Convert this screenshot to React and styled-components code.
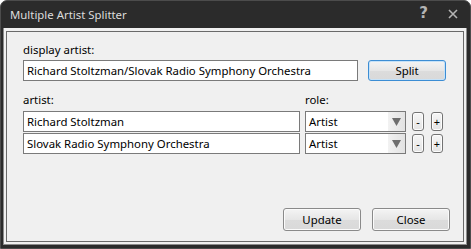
import React from 'react';
import styled, { createGlobalStyle } from 'styled-components';

const GlobalStyle = createGlobalStyle`
  html, body {
    margin: 0;
    padding: 0;
    background: #ffffff;
  }
  body {
    font-family: "Noto Sans", "Liberation Sans", sans-serif;
    font-size: 11.4px;
    color: #000;
  }
  * {
    box-sizing: border-box;
  }
`;

const artists = [
  { name: 'Richard Stoltzman', role: 'Artist' },
  { name: 'Slovak Radio Symphony Orchestra', role: 'Artist' },
];

const App = () => {
  return (
    <>
      <GlobalStyle />
      <Window>
        <TitleBar>
          <Title>Multiple Artist Splitter</Title>
          <TitleButtons>
            <HelpGlyph>?</HelpGlyph>
            <svg width="10" height="10" viewBox="0 0 10 10">
              <path d="M1 1 L9 9 M9 1 L1 9" stroke="#b4b4b4" strokeWidth="1.6" />
            </svg>
          </TitleButtons>
        </TitleBar>
        <Body>
          <Panel>
            <Label>display artist:</Label>
            <SplitRow>
              <TextBox
                $width={335}
                defaultValue="Richard Stoltzman/Slovak Radio Symphony Orchestra"
              />
              <Button $primary $height={21}>Split</Button>
            </SplitRow>

            <ArtistGrid>
              <Label>artist:</Label>
              <Label>role:</Label>
              <span />
              {artists.map((a, i) => (
                <React.Fragment key={i}>
                  <TextBox $width={277} defaultValue={a.name} />
                  <Select>
                    <span>{a.role}</span>
                    <Arrow>
                      <svg width="9" height="8" viewBox="0 0 9 8">
                        <path d="M0 0 H9 L4.5 8 Z" fill="#6e6e6e" />
                      </svg>
                    </Arrow>
                  </Select>
                  <PlusMinus>
                    <SmallButton>-</SmallButton>
                    <SmallButton>+</SmallButton>
                  </PlusMinus>
                </React.Fragment>
              ))}
            </ArtistGrid>

            <Footer>
              <Button $height={23}>Update</Button>
              <Button $height={23}>Close</Button>
            </Footer>
          </Panel>
        </Body>
      </Window>
    </>
  );
};

export default App;

///Styled Components

const Window = styled.div`
  width: 471px;
  height: 249px;
  background: #2b2b2b;
  border: 1px solid #4c4c4c;
  border-radius: 7px 7px 0 0;
  padding: 0 3px 3px 2px;
  display: flex;
  flex-direction: column;
`;

const TitleBar = styled.div`
  height: 27px;
  flex: none;
  display: flex;
  align-items: center;
  justify-content: space-between;
  padding: 0 9px 0 7px;
`;

const Title = styled.div`
  color: #dcdcdc;
  font-size: 11.4px;
  margin-top: -1px;
`;

const TitleButtons = styled.div`
  display: flex;
  align-items: center;
  gap: 20px;
  margin-top: -2px;
`;

const HelpGlyph = styled.span`
  color: #b4b4b4;
  font-family: "DejaVu Sans", sans-serif;
  font-weight: bold;
  font-size: 15px;
  line-height: 1;
`;

const Body = styled.div`
  flex: 1;
  background: #f0f0f0;
  border: 1px solid #8c8c8c;
  border-top: none;
  padding: 3px 2px 2px 2px;
  display: flex;
`;

const Panel = styled.div`
  flex: 1;
  border: 1px solid #6a6a6a;
  padding: 10px 13px 10px 16px;
  display: flex;
  flex-direction: column;
`;

const Label = styled.div`
  line-height: 16px;
  height: 16px;
  margin-bottom: 2px;
  color: #000;
`;

const SplitRow = styled.div`
  display: flex;
  align-items: center;
  gap: 10px;
  margin-bottom: 11px;
`;

const TextBox = styled.input`
  width: ${(p) => p.$width}px;
  height: 21px;
  border: 1px solid #7a7a7a;
  background: #fff;
  font-family: inherit;
  font-size: 11.4px;
  padding: 0 3px;
  margin: 0;
  color: #000;
  outline: none;
`;

const Button = styled.button`
  width: 78px;
  height: ${(p) => p.$height}px;
  border: 1px solid ${(p) => (p.$primary ? '#3c8dd4' : '#8a8a8a')};
  border-radius: 3px;
  background: linear-gradient(#f4f4f4, #e6e6e6 50%, #dcdcdc 51%, #d9d9d9);
  box-shadow: inset 0 0 0 1px ${(p) => (p.$primary ? '#c6e2f8' : '#fbfbfb')};
  font-family: inherit;
  font-size: 11.4px;
  color: #000;
  padding: 0;
`;

const ArtistGrid = styled.div`
  display: grid;
  grid-template-columns: 277px 101px auto;
  column-gap: 5px;
  row-gap: 1px;
  align-items: center;
`;

const Select = styled.div`
  height: 21px;
  border: 1px solid #7a7a7a;
  background: #fff;
  display: flex;
  align-items: center;
  justify-content: space-between;
  padding-left: 3px;
`;

const Arrow = styled.div`
  width: 17px;
  height: 100%;
  background: linear-gradient(to right, #f2f2f2, #e2e2e2);
  display: flex;
  align-items: center;
  justify-content: center;
`;

const PlusMinus = styled.div`
  display: flex;
  gap: 7px;
  margin-left: 1px;
`;

const SmallButton = styled.button`
  width: 12px;
  height: 19px;
  border: 1px solid #737373;
  border-radius: 3px;
  background: linear-gradient(#f6f6f6, #e4e4e4);
  box-shadow: inset 0 0 0 1px #fdfdfd;
  font-family: inherit;
  font-size: 11px;
  line-height: 1;
  padding: 0;
  color: #000;
`;

const Footer = styled.div`
  margin-top: auto;
  display: flex;
  justify-content: flex-end;
  gap: 11px;
`;
